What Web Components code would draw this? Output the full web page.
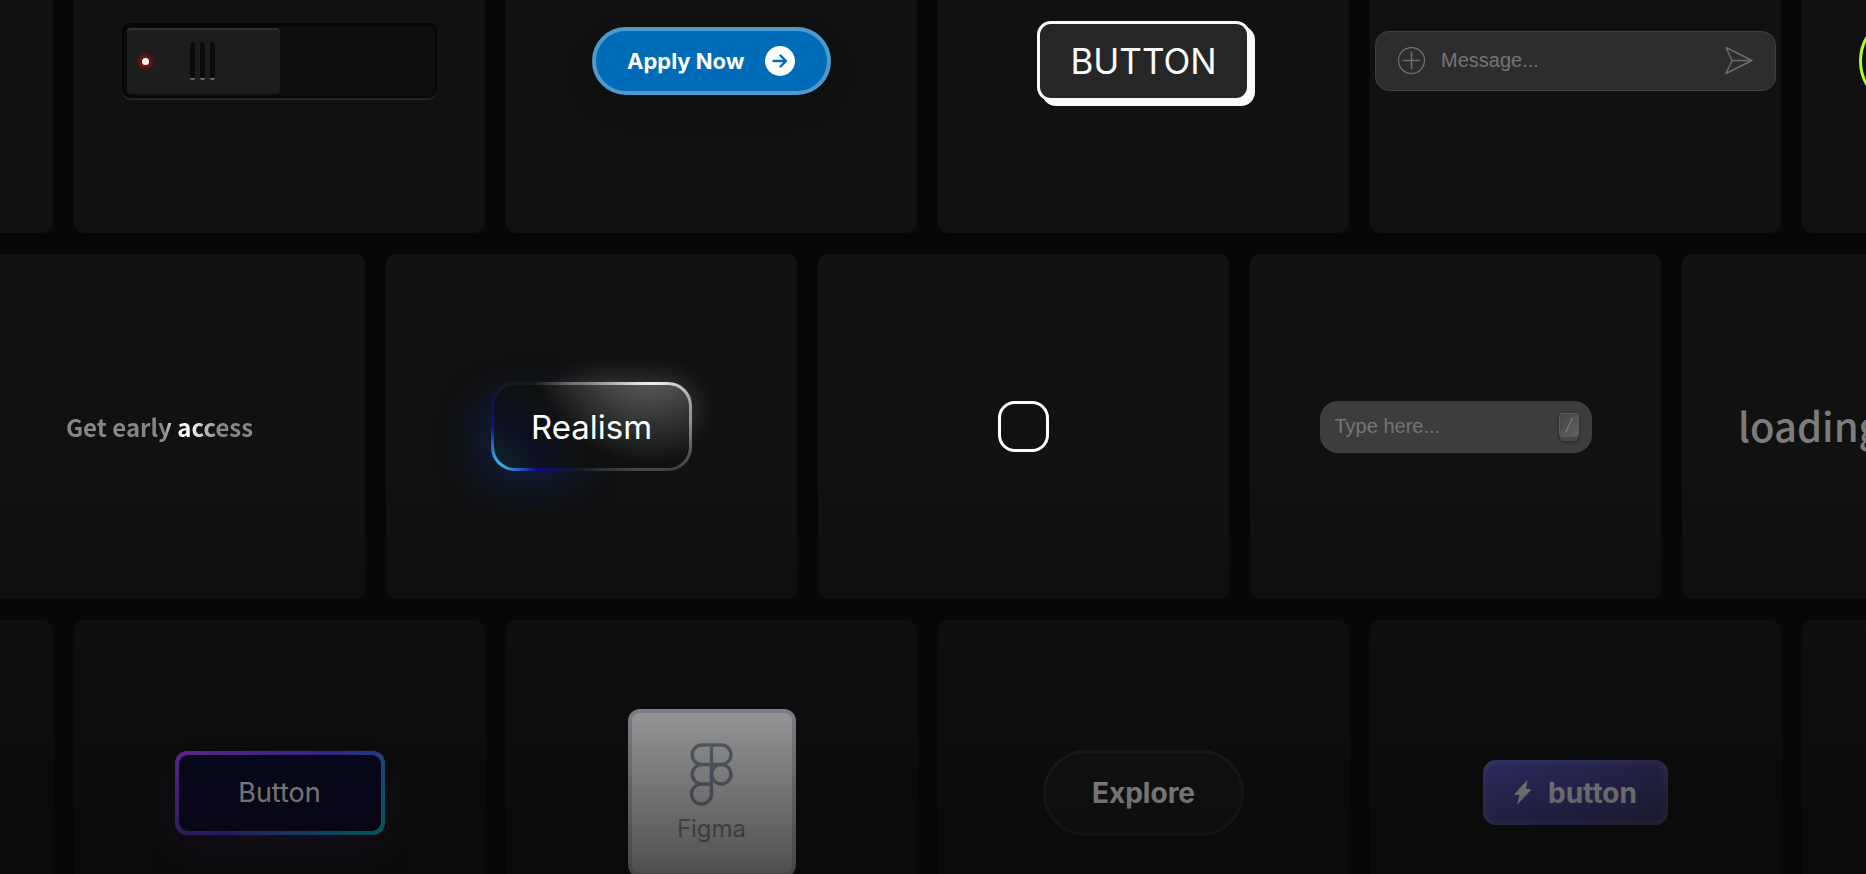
<!DOCTYPE html>
<html lang="en">
<head>
<meta charset="utf-8">
<title>Element gallery</title>
<style>
body { margin: 0; background: #070707; color: #fff; font-family: Inter, sans-serif; }
</style>
</head>
<body>
<gallery-wall>
  <gallery-row class="shifted">
    <gallery-card></gallery-card>
    <gallery-card><slide-switch></slide-switch></gallery-card>
    <gallery-card><apply-button>Apply Now</apply-button></gallery-card>
    <gallery-card><brutal-button>BUTTON</brutal-button></gallery-card>
    <gallery-card><message-box></message-box></gallery-card>
    <gallery-card><lime-button></lime-button></gallery-card>
  </gallery-row>
  <gallery-row>
    <gallery-card code><shine-link>Get early access</shine-link></gallery-card>
    <gallery-card code><real-button>Realism</real-button></gallery-card>
    <gallery-card><check-box></check-box></gallery-card>
    <gallery-card><type-box></type-box></gallery-card>
    <gallery-card><word-loader>loading</word-loader></gallery-card>
  </gallery-row>
  <gallery-row class="shifted">
    <gallery-card></gallery-card>
    <gallery-card><gradient-button>Button</gradient-button></gallery-card>
    <gallery-card><figma-tile>Figma</figma-tile></gallery-card>
    <gallery-card><explore-button>Explore</explore-button></gallery-card>
    <gallery-card><bolt-button>button</bolt-button></gallery-card>
    <gallery-card></gallery-card>
  </gallery-row>
</gallery-wall>
<script>
const reset = `
  *, *::before, *::after { box-sizing: border-box; }
  button, input, a { font: inherit; color: inherit; margin: 0; padding: 0; border: 0; background: none; outline: 0; text-decoration: none; }
  button { cursor: pointer; }
  svg { display: block; flex: none; }
`;
function define(name, css, html) {
  customElements.define(name, class extends HTMLElement {
    constructor() {
      super();
      this.attachShadow({ mode: 'open' }).innerHTML = `<style>${reset}${css}</style>${html}`;
    }
  });
}

define('gallery-wall', `
  :host { display: block; position: relative; height: 100vh; overflow: hidden; }
  main { display: flex; flex-direction: column; gap: 21px; margin-top: -112px; }
  .fade { position: absolute; inset: 0; pointer-events: none; background: linear-gradient(rgba(7,7,7,0) 54%, rgba(7,7,7,.7)); }
`, `<main><slot></slot></main><div class="fade"></div>`);

define('gallery-row', `
  :host { display: flex; gap: 21px; margin-left: -46px; }
  :host(.shifted) { margin-left: -358px; }
`, `<slot></slot>`);

define('gallery-card', `
  :host { display: flex; flex: none; align-items: center; justify-content: center; position: relative; width: 411px; height: 345px; border-radius: 10px; background: #111; }
  .code { display: none; position: absolute; right: 30px; bottom: 28px; align-items: center; gap: 10px; color: #0f0f0f; font: 600 22px/28px Inter, sans-serif; }
  :host([code]) .code { display: flex; }
`, `<slot></slot><a class="code" href="#code"><svg width="28" height="24" viewBox="0 0 28 24" fill="none" stroke="currentColor" stroke-width="2"><path d="M8 4 1 12l7 8M20 4l7 8-7 8M17 2l-6 20"/></svg>Get code</a>`);

define('slide-switch', `
  :host { display: block; }
  label { display: block; position: relative; width: 315px; height: 75px; padding: 5px; border-radius: 9px; background: #0d0d0d; box-shadow: inset 0 3px 2px #050505, inset 2px 0 3px #060606, inset -1px 0 2px #070707, 0 2px 0 #262626; }
  input { position: absolute; inset: 0; opacity: 0; width: 100%; height: 100%; }
  .knob { display: flex; align-items: center; width: 153px; height: 66px; padding-left: 15px; border-radius: 4px; background: #1c1e1d; box-shadow: inset 0 2px 0 #303231; }
  .dot { width: 7px; height: 7px; border-radius: 50%; background: #fff; box-shadow: 0 0 5px 2px #b01018, 0 0 10px 2px rgba(200,0,0,.3); }
  .grip { display: flex; gap: 5px; margin-left: 41px; }
  .grip i { width: 5px; height: 38px; border-radius: 3px; background: #0b0c0c; border-bottom: 2px solid #6d6f6e; }
`, `<label><input type="checkbox" aria-label="Power switch"><span class="knob"><span class="dot"></span><span class="grip"><i></i><i></i><i></i></span></span></label>`);

define('apply-button', `
  button { display: flex; align-items: center; justify-content: space-between; width: 239px; height: 68px; padding: 0 29px 0 31px; border: 4px solid #4f99cd; border-radius: 34px; background: #006bb6; font: 700 22px/28px Inter, sans-serif; white-space: nowrap; box-shadow: 0 12px 28px rgba(0,0,0,.15); }
`, `<button type="button"><slot></slot><svg width="36" height="30" viewBox="0 0 36 30" fill="none"><circle cx="18" cy="15" r="15" fill="#fff"/><path d="M11.500 15h12M18.500 9.500 24 15l-5.500 5.500" stroke="#006bb6" stroke-width="2.400" stroke-linecap="round" stroke-linejoin="round"/></svg></button>`);

define('brutal-button', `
  button { width: 213px; height: 80px; border: 3px solid #fafafa; border-radius: 14px; background: #262626; box-shadow: 5px 5px 0 #fafafa; font: 400 35px/44px Inter, sans-serif; color: #fafafa; }
`, `<button type="button"><slot></slot></button>`);

define('message-box', `
  form { display: flex; align-items: center; width: 401px; height: 60px; padding: 0 20px 0 22px; border: 1px solid #3f3f3f; border-radius: 14px; background: #2d2d2d; color: #6c6c6c; }
  input { flex: 1; min-width: 0; margin: 0 0 2px 15px; font: 400 20px/28px "Liberation Sans", sans-serif; color: #fff; }
  input::placeholder { color: #757575; opacity: 1; }
`, `<form><button type="button" aria-label="Add file"><svg width="28" height="28" viewBox="0 0 28 28" fill="none" stroke="currentColor" stroke-width="1.3" stroke-linecap="round"><circle cx="13.500" cy="13.500" r="13"/><path d="M13.500 5.500v16M5.500 13.500h16" stroke-width="1.6"/></svg></button>
<input type="text" placeholder="Message..." aria-label="Message">
<button type="button" aria-label="Send"><svg width="30" height="30" viewBox="0 0 30 30" fill="none" stroke="currentColor" stroke-width="1.4" stroke-linejoin="round"><path d="M1 1.500 27 14.500 1 27.500l6-13ZM7 14.500h20"/></svg></button></form>`);

define('lime-button', `
  button { display: block; width: 297px; height: 96px; border: 3px solid greenyellow; border-radius: 48px; }
`, `<button type="button" aria-label="Outlined button"></button>`);

define('shine-link', `
  a { display: block; font: 700 24px/32px "Noto Sans CJK SC", sans-serif; white-space: nowrap; color: transparent; background: linear-gradient(90deg, #868686 52%, #fff 60%, #fff 66%, #868686 82%); -webkit-background-clip: text; background-clip: text; }
`, `<a href="#access"><slot></slot></a>`);

define('real-button', `
  :host { display: block; }
  button { display: block; position: relative; z-index: 0; width: 201px; height: 89px; padding: 3px; border-radius: 24px; background: radial-gradient(circle 120px at 80% -10%, #fff, #181b1b); font: 400 33px/40px Inter, sans-serif; }
  button::after { content: ""; position: absolute; z-index: -1; top: 0; right: 0; width: 65%; height: 60%; border-radius: 120px; box-shadow: 0 0 30px #ffffff38; }
  .glow { position: absolute; left: 0; bottom: 0; width: 105px; height: 100%; border-radius: 24px; background: radial-gradient(circle 90px at 0% 100%, #3fe9ff, #0000ff80, transparent); box-shadow: -15px 15px 45px #0051ff2d; }
  .inner { display: flex; align-items: center; justify-content: center; position: relative; z-index: 1; height: 100%; border-radius: 21px; background: radial-gradient(circle 90px at 0% 100%, #00e1ff1a, #0000ff11, transparent), radial-gradient(circle 120px at 80% -50%, #777, #0f1111); }
`, `<button type="button"><span class="glow"></span><span class="inner"><slot></slot></span></button>`);

define('check-box', `
  input { appearance: none; display: block; width: 51px; height: 51px; border: 3px solid #fff; border-radius: 17px; }
`, `<input type="checkbox" aria-label="Select">`);

define('type-box', `
  label { display: flex; align-items: center; width: 272px; height: 52px; padding: 0 13px 0 15px; border-radius: 18px; background: #3d3d3d; }
  input { flex: 1; min-width: 0; margin-bottom: 2px; font: 400 20px/28px "Liberation Sans", sans-serif; }
  input::placeholder { color: #757575; opacity: 1; }
`, `<label><input type="text" placeholder="Type here..." aria-label="Type here"><svg width="20" height="32" viewBox="0 0 20 32" style="overflow:visible"><defs><linearGradient id="k" x1="0" y1="0" x2="1" y2="1"><stop stop-color="#414141"/><stop offset="1" stop-color="#646464"/></linearGradient><filter id="s" x="-50%" y="-50%" width="200%" height="200%"><feDropShadow dx="0" dy="1" stdDeviation="2" flood-color="#000" flood-opacity=".5"/></filter></defs><rect x="1" y="2" width="18" height="28" rx="4" fill="#464646" filter="url(#s)"/><rect x=".5" y="2.5" width="19" height="23" rx="3" fill="url(#k)" stroke="#5c5c5c"/><path d="M13.500 7 6.500 21.500" stroke="#8b8b8b"/></svg></label>`);

define('word-loader', `
  :host { display: block; width: 299px; padding-bottom: 4px; }
  p { margin: 0; font: 500 40px/60px "Noto Sans CJK SC", sans-serif; color: #7c7c7c; }
`, `<p><slot></slot></p>`);

define('gradient-button', `
  button { display: block; width: 210px; height: 84px; padding: 4px; border-radius: 12px; background: linear-gradient(144deg, #af40ff, #5b42f3 50%, #00ddeb); box-shadow: 0 20px 40px -6px rgba(151,65,252,.2); font: 400 27px/32px Inter, sans-serif; }
  span { display: flex; align-items: center; justify-content: center; height: 100%; border-radius: 9px; background: #05062d; }
`, `<button type="button"><span><slot></slot></span></button>`);

define('figma-tile', `
  button { display: flex; flex-direction: column; align-items: center; justify-content: center; gap: 7px; width: 168px; height: 168px; padding-top: 3px; border: 4px solid #cbd2e0; border-radius: 12px; background: #fafafa; color: #8f9bad; font: 400 24px/32px Inter, sans-serif; }
`, `<button type="button"><svg width="43" height="63" viewBox="0 0 43 63" fill="none" stroke="currentColor" stroke-width="3.400"><path d="M21.500 2H12a9.750 9.750 0 0 0 0 19.500h9.500ZM21.500 2h9.750a9.750 9.750 0 0 1 0 19.500H21.500ZM21.500 21.500H12A9.750 9.750 0 0 0 12 41h9.500ZM21.500 41H12a10 10 0 1 0 9.500 10Z"/><circle cx="31.250" cy="31.250" r="9.750"/></svg><slot></slot></button>`);

define('explore-button', `
  button { display: block; width: 201px; height: 86px; border: 3px solid #282828; border-radius: 43px; background: #191919; font: 700 28px/36px Inter, sans-serif; }
`, `<button type="button"><slot></slot></button>`);

define('bolt-button', `
  button { display: flex; align-items: center; justify-content: center; gap: 17px; width: 185px; height: 65px; border-radius: 13px; background: linear-gradient(140deg, #4f4cb8, #38356a); box-shadow: inset 0 0 8px rgba(255,255,255,.2); font: 700 28px/32px Inter, sans-serif; color: #e8e8e8; }
`, `<button type="button"><svg width="17" height="25" viewBox="0 0 17 25" fill="currentColor"><path d="M13.500 0 1 13.500q-1 1.500.500 1.500h4L3 25 16.500 10.500q.800-1.500-.500-1.500h-4Z"/></svg><slot></slot></button>`);
</script>
</body>
</html>
